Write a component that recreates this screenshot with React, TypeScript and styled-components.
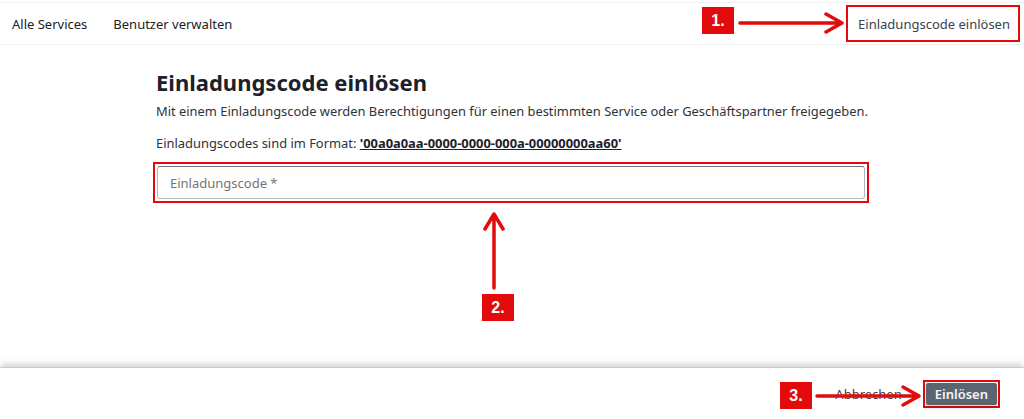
import React from 'react'
import styled, { createGlobalStyle } from 'styled-components'

const Red = '#e20a0a'
const Ink = '#1c2129'
const Text = '#2e333b'

const GlobalStyle = createGlobalStyle`
  html, body, #root {
    margin: 0;
    height: 100%;
  }
  body {
    font-family: "Noto Sans", "Open Sans", sans-serif;
    color: ${Text};
    background: #ffffff;
  }
`

export default function App() {
  return (
    <Page>
      <GlobalStyle />
      <Nav>
        <NavLink>Alle Services</NavLink>
        <NavLink>Benutzer verwalten</NavLink>
        <NavSpacer />
        <NavLink $marked>Einladungscode einlösen</NavLink>
      </Nav>

      <Main>
        <Content>
          <Title>Einladungscode einlösen</Title>
          <Lead>
            Mit einem Einladungscode werden Berechtigungen für einen bestimmten Service oder
            Geschäftspartner freigegeben.
          </Lead>
          <Format>
            Einladungscodes sind im Format: <Code>'00a0a0aa-0000-0000-000a-00000000aa60'</Code>
          </Format>
          <InputMark>
            <CodeInput placeholder="Einladungscode *" />
          </InputMark>
        </Content>
      </Main>

      <Footer>
        <CancelButton>Abbrechen</CancelButton>
        <ButtonMark>
          <SubmitButton>Einlösen</SubmitButton>
        </ButtonMark>
      </Footer>

      {/* Markierungen aus der Anleitung */}
      <Badge style={{ left: 702, top: 7 }}>1.</Badge>
      <Badge style={{ left: 482, top: 294 }}>2.</Badge>
      <Badge style={{ left: 780, top: 382 }}>3.</Badge>
      <Arrows viewBox="0 0 1024 419">
        <Arrow d="M740 23 H841 M826 14 L842 23 L826 32" />
        <Arrow d="M494 288 V215 M485 229 L494 214 L503 229" />
        <Arrow d="M817 396 H918 M903 387 L919 396 L903 405" />
      </Arrows>
    </Page>
  )
}

const Page = styled.div`
  position: relative;
  display: flex;
  flex-direction: column;
  height: 100vh;
  overflow: hidden;
`

const Nav = styled.nav`
  display: flex;
  align-items: center;
  gap: 26px;
  margin-top: 2px;
  height: 41px;
  padding: 0 4px 0 12px;
  border-top: 1px solid #eff1f3;
  border-bottom: 1px solid #eff1f3;
`

const NavSpacer = styled.div`
  flex: 1;
`

const NavLink = styled.a<{ $marked?: boolean }>`
  display: flex;
  align-items: center;
  font-size: 13px;
  color: ${Ink};
  white-space: nowrap;
  cursor: pointer;
  ${p =>
    p.$marked &&
    `
    box-sizing: border-box;
    height: 37px;
    padding: 0 8px 0 10px;
    border: 2px solid ${Red};
    color: #3a414b;
  `}
`

const Main = styled.main`
  flex: 1;
`

const Content = styled.div`
  width: 712px;
  margin: 0 auto;
  padding-top: 22px;
  display: flex;
  flex-direction: column;
`

const Title = styled.h1`
  margin: 0;
  font-size: 22px;
  line-height: 30px;
  font-weight: 700;
  color: ${Ink};
`

const Lead = styled.p`
  margin: 5px 0 0;
  font-size: 12.9px;
  line-height: 18px;
  white-space: nowrap;
`

const Format = styled.p`
  margin: 14px 0 0;
  font-size: 12.9px;
  line-height: 18px;
`

const Code = styled.span`
  font-weight: 700;
  text-decoration: underline;
  color: ${Ink};
`

const InputMark = styled.div`
  margin: 10px 0 0 -3px;
  width: 716px;
  box-sizing: border-box;
  padding: 2px;
  border: 2px solid ${Red};
`

const CodeInput = styled.input`
  display: block;
  box-sizing: border-box;
  width: 100%;
  height: 33px;
  padding: 0 12px;
  border: 1px solid #b4b9bf;
  border-top-color: #6f7680;
  border-radius: 3px;
  outline: none;
  font-family: inherit;
  font-size: 13px;
  color: ${Ink};
  background: #fff;

  ::placeholder {
    color: #7b818a;
  }
`

const Footer = styled.footer`
  display: flex;
  align-items: center;
  justify-content: flex-end;
  gap: 21px;
  height: 51px;
  padding: 0 24px 0 0;
  border-top: 1px solid #c9cdd3;
  box-shadow: 0 -4px 6px -1px rgba(120, 128, 140, 0.35);
  background: #fff;
`

const CancelButton = styled.button`
  border: 0;
  padding: 0;
  background: none;
  font-family: inherit;
  font-size: 13px;
  color: #3a414b;
  cursor: pointer;
`

const ButtonMark = styled.div`
  display: flex;
  padding: 1px;
  border: 2px solid ${Red};
`

const SubmitButton = styled.button`
  height: 22px;
  padding: 0 9px;
  border: 0;
  border-radius: 2px;
  background: #5a6570;
  color: #f4f6f8;
  font-family: inherit;
  font-size: 13px;
  font-weight: 600;
  box-shadow: 0 2px 4px rgba(0, 0, 0, 0.2);
  cursor: pointer;
`

const Badge = styled.div`
  position: absolute;
  width: 32px;
  height: 27px;
  display: flex;
  align-items: center;
  justify-content: center;
  background: ${Red};
  color: #fff;
  font-family: "Liberation Sans", Arial, sans-serif;
  font-weight: 700;
  font-size: 16px;
`

const Arrows = styled.svg`
  position: absolute;
  inset: 0;
  width: 1024px;
  height: 419px;
  pointer-events: none;
`

const Arrow = styled.path`
  fill: none;
  stroke: ${Red};
  stroke-width: 3.5;
  stroke-linecap: round;
  stroke-linejoin: round;
`
